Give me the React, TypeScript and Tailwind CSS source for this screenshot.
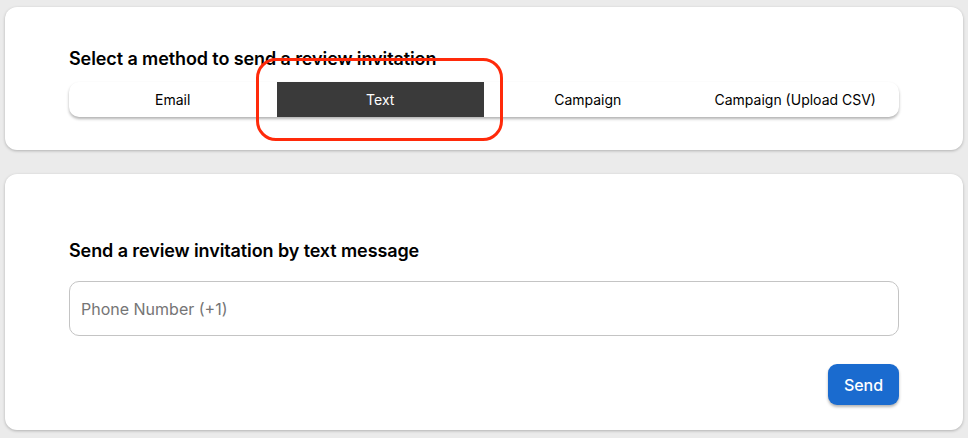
import React, { useState } from 'react';

const methods = ['Email', 'Text', 'Campaign', 'Campaign (Upload CSV)'];

export default function App() {
  const [active, setActive] = useState('Text');
  const [phone, setPhone] = useState('');

  return (
    <div className="min-h-screen bg-[#ebebeb] px-[5px] pt-[7px] pb-2 font-['Inter',sans-serif] text-black">
      {/* Method selector */}
      <div className="bg-white rounded-xl shadow-[0_1px_3px_rgba(0,0,0,0.25)] h-[143px] px-16 pt-[41px]">
        <h2 className="text-[18px] font-semibold leading-[22px] tracking-[-0.1px]">
          Select a method to send a review invitation
        </h2>
        <div className="relative mt-[12px] flex h-[35px] rounded-[10px] bg-white shadow-[0_2px_3px_rgba(0,0,0,0.3)]">
          {methods.map((m) => (
            <button
              key={m}
              onClick={() => setActive(m)}
              className={
                m === active
                  ? 'flex-1 bg-[#3a3a3a] text-white text-[14px] font-normal'
                  : 'flex-1 text-[14px] font-normal text-black'
              }
            >
              {m}
            </button>
          ))}
          {/* highlight annotation */}
          <div className="pointer-events-none absolute left-[187px] top-[-24px] w-[247px] h-[83px] rounded-[20px] border-[3.5px] border-[#ff2a0a]" />
        </div>
      </div>

      {/* Text form */}
      <div className="mt-6 bg-white rounded-xl shadow-[0_1px_3px_rgba(0,0,0,0.25)] h-[256px] px-16 pt-[66px]">
        <h2 className="text-[18px] font-semibold leading-[22px] tracking-[-0.1px]">
          Send a review invitation by text message
        </h2>
        <input
          value={phone}
          onChange={(e) => setPhone(e.target.value)}
          placeholder="Phone Number (+1)"
          className="mt-[19px] block w-full h-[55px] rounded-[10px] border border-[#c4c4c4] px-[11px] text-[16px] placeholder:text-[#757575] outline-none"
        />
        <div className="mt-7 flex justify-end">
          <button className="h-[41px] w-[71px] rounded-[9px] bg-[#1a6bcf] text-white text-[16px] font-medium shadow-[0_2px_3px_rgba(0,0,0,0.3)]">
            Send
          </button>
        </div>
      </div>
    </div>
  );
}
